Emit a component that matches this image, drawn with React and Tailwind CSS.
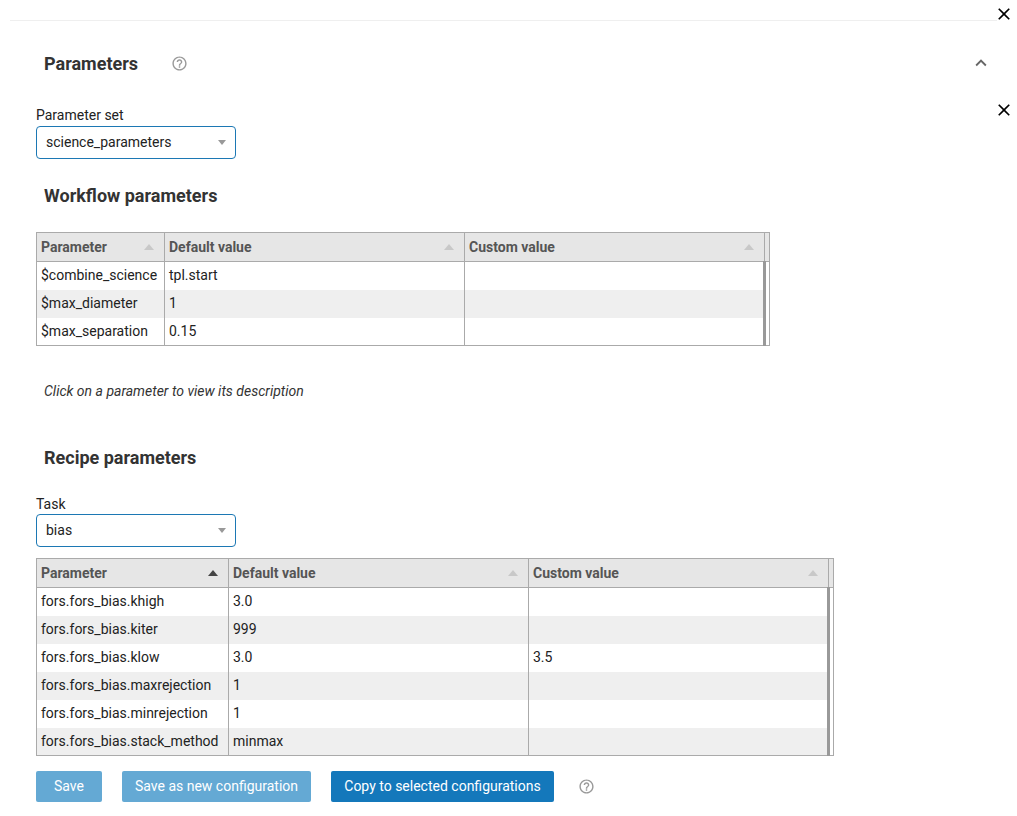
import { MdClose, MdHelpOutline, MdKeyboardArrowUp } from "react-icons/md";

const font = { fontFamily: "Roboto, 'Liberation Sans', sans-serif" };

function Caret({ down = false, dark = false }) {
  return (
    <svg width="10" height="6" viewBox="0 0 10 6" className="shrink-0">
      <path
        d={down ? "M0 0 L10 0 L5 6 Z" : "M0 6 L10 6 L5 0 Z"}
        fill={dark ? "#444" : "#c8c8c8"}
      />
    </svg>
  );
}

function Select({ value }) {
  return (
    <div className="w-[200px] h-[33px] border border-[#1c78b4] rounded-[4px] flex items-center justify-between pl-[9px] pr-[9px] text-[14px] text-[#222]">
      <span>{value}</span>
      <svg width="8" height="5" viewBox="0 0 8 5">
        <path d="M0 0 L8 0 L4 5 Z" fill="#999" />
      </svg>
    </div>
  );
}

function ParamTable({ cols, rows, activeSort }) {
  return (
    <table className="border-collapse border border-[#aaa] text-[14px] table-fixed">
      <thead>
        <tr className="bg-[#e6e6e6] h-[29px]">
          {cols.map((c, i) => (
            <th
              key={c.label}
              style={{ width: c.w }}
              className="border border-[#aaa] text-left font-bold text-[#555] px-[4px] py-0"
            >
              <div className="flex items-center justify-between pr-[6px]">
                <span>{c.label}</span>
                <Caret dark={activeSort && i === 0} />
              </div>
            </th>
          ))}
          <th className="w-[5px] border border-[#aaa] p-0" />
        </tr>
      </thead>
      <tbody>
        {rows.map((r, ri) => (
          <tr key={ri} className={ri % 2 === 1 ? "bg-[#efefef] h-[28px]" : "bg-white h-[28px]"}>
            {r.map((v, ci) => (
              <td
                key={ci}
                className="border-l border-[#aaa] px-[4px] py-0 text-[#222] whitespace-nowrap overflow-hidden"
              >
                {v}
              </td>
            ))}
            <td className="p-0 bg-white border-l-[3px] border-[#999]" />
          </tr>
        ))}
      </tbody>
    </table>
  );
}

export default function App() {
  return (
    <div className="relative w-[1017px] h-[816px] bg-white text-[#333] overflow-hidden" style={font}>
      <button className="absolute left-[994px] top-[4px] text-black">
        <MdClose size={20} />
      </button>
      <button className="absolute left-[994px] top-[100px] text-black">
        <MdClose size={20} />
      </button>

      <div className="pt-[20px] pl-[10px] pr-[20px]">
        <div className="h-px bg-[#efefef]" />
      </div>

      <div className="pl-[36px] pr-[25px]">
        <div className="mt-[30px] h-[24px] flex items-center justify-between">
          <div className="flex items-center pl-[8px]">
            <h2 className="text-[18px] font-bold text-[#333]">Parameters</h2>
            <MdHelpOutline size={17} className="ml-[33px] text-[#999]" />
          </div>
          <MdKeyboardArrowUp size={22} className="text-[#666]" />
        </div>

        <div className="mt-[30px] text-[14px] leading-[20px] text-[#222]">Parameter set</div>
        <div className="mt-[1px]">
          <Select value="science_parameters" />
        </div>

        <h3 className="mt-[25px] pl-[8px] text-[18px] leading-[24px] font-bold text-[#333]">
          Workflow parameters
        </h3>

        <div className="mt-[24px]">
          <ParamTable
            cols={[
              { label: "Parameter", w: 128 },
              { label: "Default value", w: 300 },
              { label: "Custom value", w: 300 },
            ]}
            rows={[
              ["$combine_science", "tpl.start", ""],
              ["$max_diameter", "1", ""],
              ["$max_separation", "0.15", ""],
            ]}
          />
        </div>

        <p className="mt-[35px] pl-[8px] text-[14px] leading-[20px] italic text-[#333]">
          Click on a parameter to view its description
        </p>

        <h3 className="mt-[45px] pl-[8px] text-[18px] leading-[24px] font-bold text-[#333]">
          Recipe parameters
        </h3>

        <div className="mt-[24px] text-[14px] leading-[20px] text-[#222]">Task</div>
        <div>
          <Select value="bias" />
        </div>

        <div className="mt-[11px]">
          <ParamTable
            activeSort
            cols={[
              { label: "Parameter", w: 192 },
              { label: "Default value", w: 300 },
              { label: "Custom value", w: 300 },
            ]}
            rows={[
              ["fors.fors_bias.khigh", "3.0", ""],
              ["fors.fors_bias.kiter", "999", ""],
              ["fors.fors_bias.klow", "3.0", "3.5"],
              ["fors.fors_bias.maxrejection", "1", ""],
              ["fors.fors_bias.minrejection", "1", ""],
              ["fors.fors_bias.stack_method", "minmax", ""],
            ]}
          />
        </div>

        <div className="mt-[15px] flex items-center gap-[20px] text-[14px] text-white">
          <button className="h-[31px] w-[66px] rounded-[2px] bg-[#64a9d4]">Save</button>
          <button className="h-[31px] w-[189px] rounded-[2px] bg-[#64a9d4]">Save as new configuration</button>
          <button className="h-[31px] w-[223px] rounded-[2px] bg-[#1478bb]">Copy to selected configurations</button>
          <MdHelpOutline size={17} className="ml-[4px] text-[#999]" />
        </div>
      </div>
    </div>
  );
}
